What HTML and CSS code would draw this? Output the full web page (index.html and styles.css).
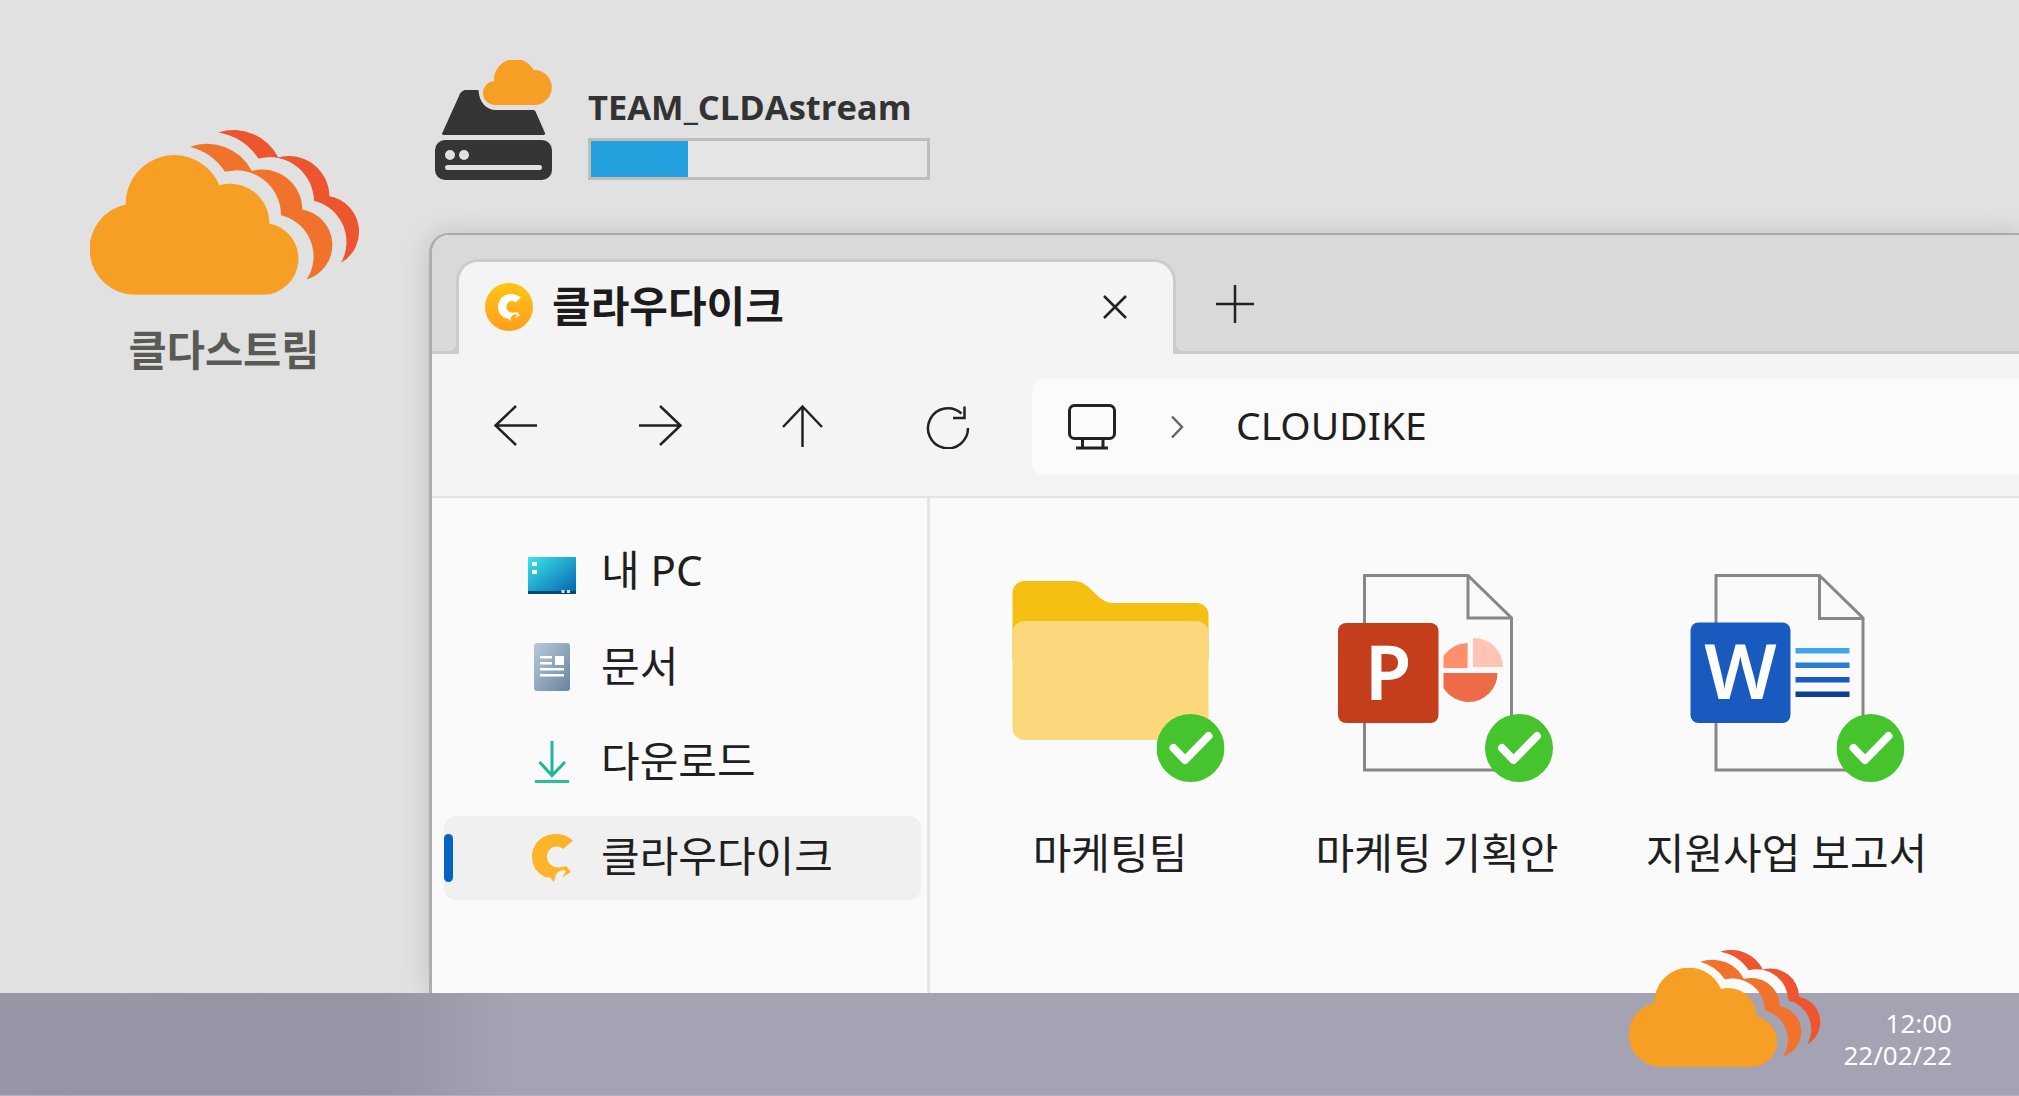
FILE: index.html
```html
<!DOCTYPE html>
<html lang="ko">
<head>
<meta charset="utf-8">
<title>클라우다이크</title>
<link rel="stylesheet" href="styles.css">
</head>
<body>
<svg class="sprite" aria-hidden="true">
  <defs>
    <linearGradient id="gradPc" x1="0" y1="0" x2="1" y2="1"><stop offset="0" stop-color="#3de4e6"/><stop offset="1" stop-color="#0362b2"/></linearGradient>
    <linearGradient id="gradDoc" x1="0" y1="0" x2="1" y2="1"><stop offset="0" stop-color="#bac9dc"/><stop offset="1" stop-color="#68849f"/></linearGradient>
    <symbol id="clouds" viewBox="90 90 810 494">
      <path fill="#ec552e" d="M475 97A150 150 0 0 1 655 172A121 121 0 0 1 808 288A108 108 0 0 1 843 488A127 127 0 0 0 762 302A134 134 0 0 0 595 175A181 181 0 0 0 475 97Z"/>
      <path fill="#f0722b" d="M390 140A150 150 0 0 1 575 212A121 121 0 0 1 727 328A108 108 0 0 1 740 538A127 127 0 0 0 663 345A134 134 0 0 0 495 215A181 181 0 0 0 390 140Z"/>
      <path fill="#f79f24" d="M225 584A137 137 0 0 1 197 313A146 146 0 0 1 478 255A118 118 0 0 1 628 370A108 108 0 0 1 610 584Z"/>
    </symbol>
    <symbol id="cshape" viewBox="0 0 41 48">
      <path d="M41 6.7C36 2 30 0 24 0C10 0 0 10 0 23C0 32 5 39 13 43L18 43.500L22 48L23.500 41C26 37 31 35 34 37L30 43.500L39 38L34 32C24 36 15 31 15 23C15 16 21 11 27 13C29 13.500 30 14 31 15Z"/>
    </symbol>
    <symbol id="check" viewBox="0 0 68 68">
      <circle cx="34" cy="34" r="34" fill="#45c42e"/>
      <path d="M17 34L28.500 46L52 22" fill="none" stroke="#fff" stroke-width="8" stroke-linecap="round" stroke-linejoin="round"/>
    </symbol>
  </defs>
</svg>

<div class="screen">
  <main class="desktop">
    <section class="app-shortcut">
      <svg class="logo-large"><use href="#clouds"/></svg>
      <div class="app-name">클다스트림</div>
    </section>

    <section class="workspace">
      <div class="drive">
        <svg class="drive-icon" viewBox="435 60 117 120">
          <path fill="#353535" d="M466 90H478.500C479 102 486 110 496 110H533C534 110 535 110.500 535.500 111.500L545 133C545.500 134.500 544.500 135 543 135H444C442.500 135 441.500 134 442.500 132.500L459 96C460 92.500 463 90 466 90Z"/>
          <path fill="#f79f24" d="M496 105A12 12 0 0 1 494 81A21 21 0 0 1 533.500 70A17.500 17.500 0 0 1 535 105Z"/>
          <path fill="#353535" fill-rule="evenodd" d="M445 140H542A10 10 0 0 1 552 150V170A10 10 0 0 1 542 180H445A10 10 0 0 1 435 170V150A10 10 0 0 1 445 140ZM450 150A5 5 0 1 0 450 160A5 5 0 1 0 450 150ZM464 150A5 5 0 1 0 464 160A5 5 0 1 0 464 150ZM447.500 165A2.500 2.500 0 0 0 447.500 170H539.500A2.500 2.500 0 0 0 539.500 165Z"/>
        </svg>
        <div class="drive-info">
          <div class="drive-name">TEAM_CLDAstream</div>
          <div class="progress"><div class="progress-fill" style="width:97px"></div></div>
        </div>
      </div>

      <div class="window">
        <div class="tabstrip">
          <div class="tab">
            <span class="tab-logo"><svg class="tab-logo-c"><use href="#cshape"/></svg></span>
            <span class="tab-title">클라우다이크</span>
            <svg class="tab-close" viewBox="0 0 26 26"><path d="M2 2L24 24M24 2L2 24"/></svg>
          </div>
          <svg class="tab-new" viewBox="0 0 40 40"><path d="M20 1V39M1 20H39"/></svg>
        </div>

        <div class="toolbar">
          <svg class="nav" viewBox="0 0 48 48"><path d="M3.500 24.500H45M24 5L3.500 24.500L24 44"/></svg>
          <svg class="nav" viewBox="0 0 48 48"><path d="M3 24.500H44.500M24 5L44.500 24.500L24 44"/></svg>
          <svg class="nav" viewBox="0 0 48 48"><path d="M22.500 46V5.500M3 26L22.500 5.500L42 26"/></svg>
          <svg class="nav" viewBox="0 0 48 48"><path d="M37.500 12.500A20 20 0 1 0 44 27M40.500 5.500V17H29"/></svg>
          <div class="address">
            <svg class="monitor" viewBox="0 0 48 46"><rect x="1.500" y="1.500" width="45" height="33" rx="5"/><path d="M14.500 35V43M35 35V43M8 44H40"/></svg>
            <svg class="chevron" viewBox="0 0 14 24"><path d="M2 1.500L12 12L2 22.500"/></svg>
            <span class="path-text">CLOUDIKE</span>
          </div>
        </div>

        <div class="body">
          <nav class="sidebar">
            <div class="side-row">
              <span class="side-icon">
                <svg class="icon-pc" viewBox="0 0 48 37">
                  <path fill="url(#gradPc)" d="M1 0H47A1 1 0 0 1 48 1V37H0V1A1 1 0 0 1 1 0Z"/>
                  <rect y="34" width="48" height="3" fill="#04496f"/>
                  <rect x="4" y="5" width="5" height="4" fill="#fff"/>
                  <rect x="4" y="13" width="5" height="4" fill="#fff"/>
                  <rect x="33.500" y="33" width="3" height="3" fill="#cfe6f0"/>
                  <rect x="39" y="33" width="3" height="3" fill="#cfe6f0"/>
                </svg>
              </span>
              <span class="side-label">내 PC</span>
            </div>
            <div class="side-row">
              <span class="side-icon">
                <svg class="icon-doc" viewBox="0 0 36 48">
                  <rect width="36" height="48" rx="3" fill="url(#gradDoc)"/>
                  <path fill="#fff" d="M6 13H18V15.500H6ZM6 19H18V21.500H6ZM21 13H30V22H21ZM6 25H30V27.500H6ZM6 31H30V33.500H6Z"/>
                </svg>
              </span>
              <span class="side-label">문서</span>
            </div>
            <div class="side-row">
              <span class="side-icon">
                <svg class="icon-dl" viewBox="0 0 34 42"><path d="M17 0V34M4.500 21L17 34.500L30 21" fill="none" stroke="#20b59a" stroke-width="3"/><rect y="39" width="34" height="3" fill="#2cc09a"/></svg>
              </span>
              <span class="side-label">다운로드</span>
            </div>
            <div class="side-row side-row-active">
              <span class="side-icon"><svg class="icon-c"><use href="#cshape"/></svg></span>
              <span class="side-label">클라우다이크</span>
            </div>
          </nav>

          <div class="files">
            <figure class="file file-folder">
              <svg class="file-icon" viewBox="989.500 570 240 215">
                <path fill="#f6c012" d="M1024 581H1073C1079 581 1083 583 1088 587C1096 594 1102 603 1112 603H1196A12 12 0 0 1 1208 615V660H1012V593A12 12 0 0 1 1024 581Z"/>
                <path fill="#fcd87c" d="M1024 621H1196A12 12 0 0 1 1208 633V728A12 12 0 0 1 1196 740H1024A12 12 0 0 1 1012 728V633A12 12 0 0 1 1024 621Z"/>
                <use href="#check" x="1156" y="714" width="68" height="68"/>
              </svg>
              <figcaption>마케팅팀</figcaption>
            </figure>
            <figure class="file file-ppt">
              <svg class="file-icon" viewBox="1317 570 240 215">
                <path class="sheet" d="M1364.500 575.500H1468L1511.500 618V770H1364.500Z"/>
                <path class="sheet" d="M1468 575.500V618H1511.500"/>
                <rect x="1338" y="623" width="100.500" height="100" rx="8" fill="#c43e1c"/>
                <text class="badge-letter" x="1388" y="700">P</text>
                <path fill="#ffc4b5" d="M1473 638A29 29 0 0 1 1503 667H1473Z"/>
                <path fill="#ff8f6b" d="M1467.600 643A30 30 0 0 0 1443.500 656V668H1467.600Z"/>
                <path fill="#ed6c47" d="M1443.500 673H1497.500A29 29 0 0 1 1469 702A30 30 0 0 1 1443.500 688Z"/>
                <use href="#check" x="1485" y="714" width="68" height="68"/>
              </svg>
              <figcaption>마케팅 기획안</figcaption>
            </figure>
            <figure class="file file-word">
              <svg class="file-icon" viewBox="1666.500 570 240 215">
                <path class="sheet" d="M1715.500 575.500H1819L1862.500 618V770H1715.500Z"/>
                <path class="sheet" d="M1819 575.500V618.500H1862.500"/>
                <rect x="1690" y="622.500" width="100" height="100.500" rx="8" fill="#185abd"/>
                <text class="badge-letter" x="1740" y="699">W</text>
                <rect x="1795" y="648" width="54" height="5.500" fill="#41a5ee"/>
                <rect x="1795" y="662.500" width="54" height="5.500" fill="#2b7cd3"/>
                <rect x="1795" y="677" width="54" height="5.500" fill="#185abd"/>
                <rect x="1795" y="691.500" width="54" height="5.500" fill="#103f91"/>
                <use href="#check" x="1836" y="714" width="68" height="68"/>
              </svg>
              <figcaption>지원사업 보고서</figcaption>
            </figure>
          </div>
        </div>
      </div>
    </section>
  </main>

  <footer class="taskbar">
    <svg class="logo-tray"><use href="#clouds"/></svg>
    <div class="clock"><span>12:00</span><span>22/02/22</span></div>
  </footer>
</div>
</body>
</html>
```
FILE: styles.css
```css
* { box-sizing: border-box; }
html, body { margin: 0; padding: 0; }
body {
  font-family: "Noto Sans", "Noto Sans CJK KR", sans-serif;
  color: #1f1f1f;
  background: #e1e1e1;
}
.sprite { position: absolute; width: 0; height: 0; }
.screen {
  width: 2019px;
  height: 1096px;
  display: flex;
  flex-direction: column;
  overflow: hidden;
  position: relative;
}
.desktop {
  flex: 1;
  min-height: 0;
  display: flex;
  background: #e1e1e1;
}
.app-shortcut {
  width: 430px;
  flex: none;
  padding: 130px 0 0 90px;
}
.logo-large { display: block; width: 270px; height: 165px; }
.app-name {
  width: 270px;
  margin: 28px 0 0 -1px;
  text-align: center;
  font: 700 41.500px/50px "Noto Sans CJK KR", sans-serif;
  color: #5a5a55;
}
.workspace {
  flex: 1;
  min-width: 0;
  display: flex;
  flex-direction: column;
}
.drive {
  height: 233px;
  flex: none;
  display: flex;
  padding: 60px 0 0 5px;
}
.drive-icon { width: 117px; height: 120px; flex: none; }
.drive-info { margin-left: 36px; }
.drive-name {
  font: 700 34.500px/44px "Open Sans", sans-serif;
  color: #333;
  margin-top: 25px;
  height: 53px;
  white-space: nowrap;
}
.progress {
  width: 342px;
  height: 42px;
  border: 3px solid #bdbdbd;
  background: #e5e5e5;
}
.progress-fill { height: 100%; background: #25a0de; }

.window {
  flex: 1;
  min-height: 0;
  margin-left: -1px;
  display: flex;
  flex-direction: column;
  border-top: 2px solid #a9a9a9;
  border-left: 3px solid #adadad;
  border-top-left-radius: 20px;
  box-shadow: 0 0 28px rgba(0, 0, 0, .14);
  overflow: hidden;
  background: #fafafa;
}
.tabstrip {
  height: 119px;
  flex: none;
  display: flex;
  align-items: flex-end;
  padding-left: 24px;
  background: #d9d9d9;
  border-bottom: 3px solid #cbcbcb;
}
.tab {
  position: relative;
  width: 720px;
  height: 95px;
  margin-bottom: -3px;
  display: flex;
  align-items: center;
  padding: 0 45px 0 26px;
  background: #f4f4f4;
  border: 3px solid #cbcbcb;
  border-bottom: 0;
  border-radius: 22px 22px 0 0;
}
.tab::before, .tab::after {
  content: "";
  position: absolute;
  bottom: 0;
  width: 12px;
  height: 14px;
  background: #d9d9d9;
  border-bottom: 3px solid #cbcbcb;
}
.tab::before {
  left: -15px;
  border-right: 3px solid #cbcbcb;
  border-bottom-right-radius: 10px;
}
.tab::after {
  right: -15px;
  border-left: 3px solid #cbcbcb;
  border-bottom-left-radius: 10px;
}
.tab-logo {
  width: 48px;
  height: 48px;
  flex: none;
  margin-bottom: 2px;
  border-radius: 50%;
  background: linear-gradient(#ffc612, #ff9e1e);
  display: flex;
  align-items: center;
  justify-content: center;
}
.tab-logo-c { width: 23px; height: 27px; fill: #fff; }
.tab-title {
  flex: 1;
  margin-left: 19px;
  padding-bottom: 8px;
  font: 700 42px/50px "Noto Sans CJK KR", sans-serif;
  color: #1c1c1c;
}
.tab-close {
  width: 26px;
  height: 26px;
  margin-bottom: 2px;
  fill: none;
  stroke: #222;
  stroke-width: 2.500;
}
.tab-new {
  width: 40px;
  height: 40px;
  margin: 0 0 27px 39px;
  fill: none;
  stroke: #222;
  stroke-width: 2.500;
}

.toolbar {
  height: 144px;
  flex: none;
  display: flex;
  align-items: center;
  padding-left: 12px;
  background: #f4f4f4;
  border-bottom: 2px solid #e4e4e4;
}
.nav {
  width: 48px;
  height: 48px;
  margin: 0 48px;
  flex: none;
  fill: none;
  stroke: #222;
  stroke-width: 2.500;
}
.address {
  flex: 1;
  height: 96px;
  margin: 3px 0 0 12px;
  display: flex;
  align-items: center;
  padding-left: 36px;
  background: #fbfbfb;
  border-radius: 12px 0 0 12px;
}
.monitor {
  width: 48px;
  height: 46px;
  flex: none;
  fill: none;
  stroke: #222;
  stroke-width: 3;
}
.chevron {
  width: 14px;
  height: 24px;
  margin-left: 54px;
  flex: none;
  fill: none;
  stroke: #666;
  stroke-width: 2.500;
}
.path-text {
  margin-left: 52px;
  padding-bottom: 4px;
  font-size: 39px;
  line-height: 50px;
  color: #1f1f1f;
}

.body { flex: 1; min-height: 0; display: flex; }
.sidebar {
  width: 498px;
  flex: none;
  padding: 32px 6px 0 12px;
  border-right: 3px solid #e6e6e6;
  display: flex;
  flex-direction: column;
  gap: 11.600px;
}
.side-row {
  position: relative;
  height: 83.700px;
  display: flex;
  align-items: center;
  padding-left: 78px;
  font-size: 42px;
  color: #1f1f1f;
  border-radius: 12px;
}
.side-icon {
  width: 60px;
  margin-right: 19px;
  flex: none;
  display: flex;
  justify-content: center;
}
.side-label { padding-bottom: 8px; }
.side-row-active { background: #f0f0f0; }
.side-row-active::before {
  content: "";
  position: absolute;
  left: 0;
  top: 18px;
  width: 9px;
  height: 48px;
  border-radius: 5px;
  background: #0563c1;
}
.icon-pc { width: 48px; height: 37px; margin-top: 8px; }
.icon-doc { width: 36px; height: 48px; }
.icon-dl { width: 34px; height: 42px; }
.icon-c { width: 41px; height: 48px; fill: #fdb32a; }

.files { flex: 1; min-width: 0; display: flex; padding: 72px 0 0 20px; }
.file { margin: 0; flex: none; display: flex; flex-direction: column; align-items: center; }
.file-folder { width: 320px; }
.file-ppt { width: 334px; }
.file-word { width: 365px; }
.file-icon { width: 240px; height: 215px; flex: none; }
.file figcaption {
  margin-top: 43px;
  font-size: 42px;
  line-height: 50px;
  white-space: nowrap;
  color: #1f1f1f;
}
.sheet { fill: none; stroke: #878787; stroke-width: 3; }
.badge-letter {
  font: 600 76px "Noto Sans", sans-serif;
  fill: #fff;
  text-anchor: middle;
}

.taskbar {
  position: relative;
  height: 103px;
  flex: none;
  display: flex;
  justify-content: flex-end;
  padding-right: 67px;
  background: linear-gradient(90deg, #9796a7 0, #9695a6 385px, #a4a2b3 510px);
  border-bottom: 1px solid #b1b0be;
}
.logo-tray {
  position: absolute;
  left: 1629px;
  top: -43px;
  width: 192px;
  height: 117px;
}
.clock {
  display: flex;
  flex-direction: column;
  align-items: flex-end;
  padding-top: 14px;
  font: 400 26px/32px "Noto Sans", sans-serif;
  color: #fff;
}
```
